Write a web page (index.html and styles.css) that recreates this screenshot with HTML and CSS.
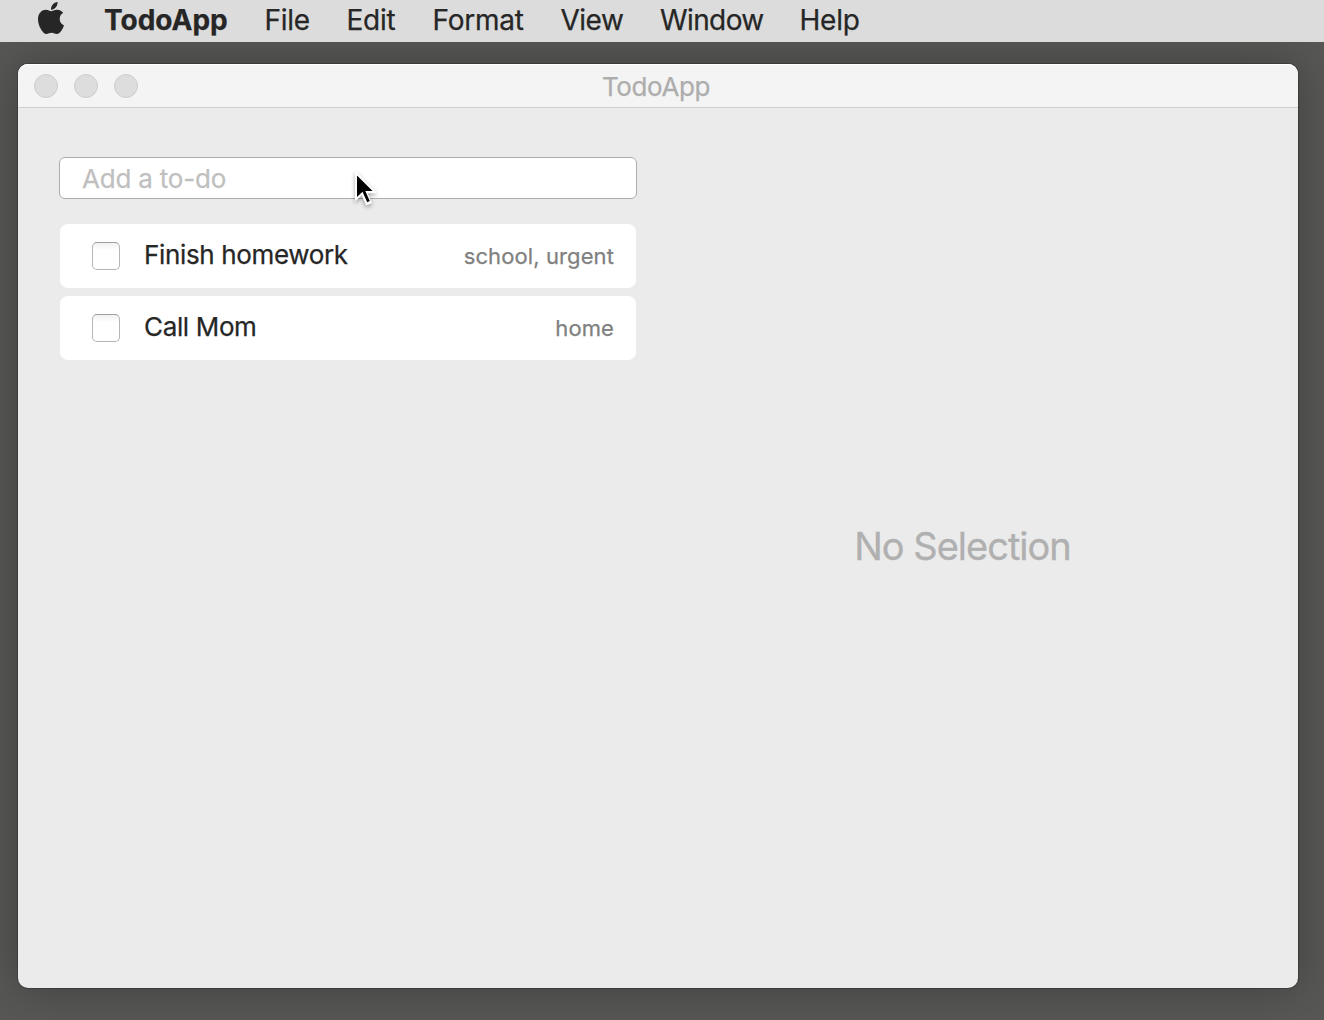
FILE: index.html
```html
<!DOCTYPE html>
<html lang="en">
<head>
<meta charset="utf-8">
<title>TodoApp</title>
<link rel="stylesheet" href="styles.css">
</head>
<body>
<nav class="menubar">
  <svg class="apple" viewBox="4 32 376.4 448" preserveAspectRatio="none" aria-label="Apple"><path d="M318.7 268.7c-.2-36.7 16.4-64.4 50-84.8-18.8-26.9-47.2-41.7-84.7-44.6-35.5-2.8-74.3 20.7-88.5 20.7-15 0-49.4-19.7-76.4-19.7C63.3 141.2 4 184.8 4 273.5q0 39.3 14.4 81.2c12.8 36.7 59 126.7 107.2 125.2 25.2-.6 43-17.9 75.8-17.9 31.8 0 48.3 17.9 76.4 17.9 48.6-.7 90.4-82.5 102.6-119.3-65.2-30.7-61.7-90-61.7-91.9zm-56.6-164.2c27.3-32.4 24.8-61.9 24-72.5-24.1 1.4-52 16.4-67.9 34.9-17.5 19.8-27.8 44.3-25.6 71.9 26.1 2 49.9-11.4 69.5-34.3z"/></svg>
  <span class="menu menu-app">TodoApp</span>
  <span class="menu menu-file">File</span>
  <span class="menu menu-edit">Edit</span>
  <span class="menu menu-format">Format</span>
  <span class="menu menu-view">View</span>
  <span class="menu menu-window">Window</span>
  <span class="menu menu-help">Help</span>
</nav>
<main class="window">
  <header class="titlebar">
    <div class="lights"><i class="light"></i><i class="light"></i><i class="light"></i></div>
    <h1 class="title">TodoApp</h1>
  </header>
  <div class="content">
    <section class="list">
      <input class="new-todo" type="text" placeholder="Add a to-do">
      <div class="todo"><span class="check"></span><span class="name">Finish homework</span><span class="tags">school, urgent</span></div>
      <div class="todo"><span class="check"></span><span class="name">Call Mom</span><span class="tags">home</span></div>
    </section>
    <section class="detail"><p class="empty">No Selection</p></section>
  </div>
</main>
<svg class="cursor" viewBox="0 0 30 42"><path d="M5 2.5V33.5L11.7 27.3L16.2 37.5L22 35L17.5 25.2H27Z" fill="#fff"/><path d="M7 7.5V29L12.5 23.8L17.2 34.2L19.8 33L15.3 23H22.6Z" fill="#000"/></svg>
</body>
</html>
```
FILE: styles.css
```css
* { box-sizing: border-box; }
body {
  margin: 0;
  width: 1324px;
  height: 1020px;
  overflow: hidden;
  display: flex;
  flex-direction: column;
  background: #575755;
  font-family: Inter, "Liberation Sans", sans-serif;
}
.menubar {
  display: flex;
  flex: none;
  height: 42px;
  padding-left: 38px;
  background: #dcdcdc;
  color: #262626;
  font-size: 28px;
  line-height: 40px;
  position: relative;
  z-index: 1;
}
.apple { width: 26px; height: 32px; margin: 2px 40px 0 0; fill: #262626; }
.menu { white-space: nowrap; letter-spacing: -0.25px; -webkit-text-stroke: 0.25px #262626; }
.menu-app { width: 160.5px; font-weight: 700; letter-spacing: 0; }
.menu-file { width: 82px; }
.menu-edit { width: 86px; }
.menu-format { width: 128px; }
.menu-view { width: 99.5px; letter-spacing: -0.5px; }
.menu-window { width: 139.5px; letter-spacing: -0.6px; }
.window {
  display: flex;
  flex-direction: column;
  width: 1280px;
  height: 924px;
  margin: 22px 0 0 18px;
  border-radius: 10px;
  background: #ebebeb;
  box-shadow: 0 0 0 1px rgba(0, 0, 0, .2), 0 0 44px rgba(0, 0, 0, .28);
}
.titlebar {
  display: grid;
  grid-template-columns: 160px 1fr 160px;
  height: 44px;
  border-bottom: 1px solid #cfcfcf;
  border-radius: 10px 10px 0 0;
  background: #f4f4f4;
  box-shadow: inset 0 1px #fff;
}
.lights { display: flex; gap: 16px; padding: 10px 0 0 16px; }
.light { width: 24px; height: 24px; border: 1px solid #cdcdcd; border-radius: 50%; background: #dddddd; }
.title { margin: 0 4px 0 0; font-size: 26px; font-weight: 400; line-height: 45px; text-align: center; color: #adadad; letter-spacing: -0.4px; -webkit-text-stroke: 0.25px #adadad; }
.content { display: flex; flex: 1; }
.list { width: 578px; margin: 49px 0 0 41px; }
.new-todo {
  display: block;
  width: 578px;
  height: 42px;
  margin: 0 0 25px;
  padding: 0 0 0 22px;
  border: 1px solid #adadad;
  border-radius: 6px;
  background: #fff;
  font: 400 26px Inter, "Liberation Sans", sans-serif;
  letter-spacing: -0.2px;
  outline: none;
}
.new-todo::placeholder { color: #bfbfbf; -webkit-text-stroke: 0.25px #bfbfbf; }
.todo {
  display: flex;
  align-items: center;
  height: 64px;
  margin: 0 1px 8px;
  padding: 0 22px 0 32px;
  border-radius: 8px;
  background: #fff;
}
.check { width: 28px; height: 28px; margin-right: 24px; border: 1px solid #b5b5b5; border-top-color: #a0a0a0; border-radius: 5px; background: linear-gradient(#f0f0f0, #fff 7px); }
.name { flex: 1; padding-bottom: 2px; font-size: 26px; line-height: 30px; color: #262626; letter-spacing: -0.35px; -webkit-text-stroke: 0.25px #262626; }
.tags { font-size: 22px; line-height: 30px; color: #808080; letter-spacing: 0.1px; -webkit-text-stroke: 0.25px #808080; }
.detail { display: flex; flex: 1; align-items: center; justify-content: center; padding: 0 10px 4px 0; }
.empty { margin: 0; font-size: 38px; line-height: 46px; color: #b0b0b0; letter-spacing: -1px; -webkit-text-stroke: 0.3px #b0b0b0; }
.cursor { position: absolute; left: 350px; top: 168px; width: 30px; height: 42px; filter: drop-shadow(0 2px 2px rgba(0, 0, 0, .35)); }
```
